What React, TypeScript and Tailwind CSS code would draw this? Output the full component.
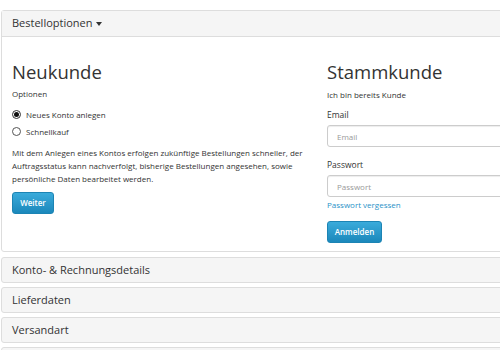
export default function App() {
  const font = "font-['Open_Sans','Liberation_Sans',sans-serif]";

  return (
    <div className={`w-[500px] h-[350px] overflow-hidden bg-white text-[#333] ${font}`}>
      <div className="pt-[10px] pl-px w-[660px]">
        {/* Bestelloptionen */}
        <div className="border border-[#ddd] rounded-[3px]">
          <div className="h-[26px] bg-[#f5f5f5] border-b border-[#ddd] px-[10px] flex items-center text-[11px]">
            Bestelloptionen
            <span className="ml-[3px] mt-[1px] border-x-[3.5px] border-x-transparent border-t-[4px] border-t-[#333]" />
          </div>
          <div className="flex h-[214px] pl-[10px]">
            {/* Neukunde */}
            <div className="w-[315px] pt-[23px]">
              <h2 className="text-[18.5px] leading-[24px]">Neukunde</h2>
              <p className="mt-[3px] text-[8px] leading-[13px]">Optionen</p>
              <label className="mt-[8px] flex items-center h-[13px] text-[8px]">
                <span className="w-[9px] h-[9px] rounded-full border border-[#333] flex items-center justify-center">
                  <span className="w-[5px] h-[5px] rounded-full bg-[#111]" />
                </span>
                <span className="ml-[5px]">Neues Konto anlegen</span>
              </label>
              <label className="mt-[4px] flex items-center h-[13px] text-[8px]">
                <span className="w-[9px] h-[9px] rounded-full border border-[#555]" />
                <span className="ml-[5px]">Schnellkauf</span>
              </label>
              <p className="mt-[8px] text-[8px] leading-[13px] whitespace-nowrap">
                Mit dem Anlegen eines Kontos erfolgen zukünftige Bestellungen schneller, der
                <br />
                Auftragsstatus kann nachverfolgt, bisherige Bestellungen angesehen, sowie
                <br />
                persönliche Daten bearbeitet werden.
              </p>
              <button className="mt-[7px] h-[22px] w-[42px] rounded-[3px] border border-[#1c84b4] bg-gradient-to-b from-[#3aabdb] to-[#1b88bb] text-white text-[8px] font-semibold">
                Weiter
              </button>
            </div>

            {/* Stammkunde */}
            <div className="w-[320px] pt-[23px]">
              <h2 className="text-[18.5px] leading-[24px]">Stammkunde</h2>
              <p className="mt-[4px] text-[8px] leading-[13px]">Ich bin bereits Kunde</p>
              <p className="mt-[7px] text-[8.5px] leading-[13px]">Email</p>
              <input
                placeholder="Email"
                className="mt-[4px] block w-[300px] h-[22px] rounded-[3px] border border-[#ccc] px-[9px] text-[8px] placeholder:text-[#999] shadow-[inset_0_1px_1px_rgba(0,0,0,0.075)] outline-none"
              />
              <p className="mt-[11px] text-[8.5px] leading-[13px]">Passwort</p>
              <input
                placeholder="Passwort"
                className="mt-[4px] block w-[300px] h-[22px] rounded-[3px] border border-[#ccc] px-[9px] text-[8px] placeholder:text-[#999] shadow-[inset_0_1px_1px_rgba(0,0,0,0.075)] outline-none"
              />
              <p className="mt-px text-[8px] leading-[13px] text-[#2a92c8]">Passwort vergessen</p>
              <button className="mt-[10px] h-[22px] w-[55px] rounded-[3px] border border-[#1c84b4] bg-gradient-to-b from-[#3aabdb] to-[#1b88bb] text-white text-[8px] font-semibold">
                Anmelden
              </button>
            </div>
          </div>
        </div>

        {/* collapsed steps */}
        <div className="mt-[5px] flex flex-col gap-[4px]">
          {["Konto- & Rechnungsdetails", "Lieferdaten", "Versandart", ""].map((t, i) => (
            <div key={i} className="h-[26px] border border-[#ddd] rounded-[3px] bg-[#f5f5f5] px-[10px] flex items-center text-[11px]">
              {t}
            </div>
          ))}
        </div>
      </div>
    </div>
  );
}
